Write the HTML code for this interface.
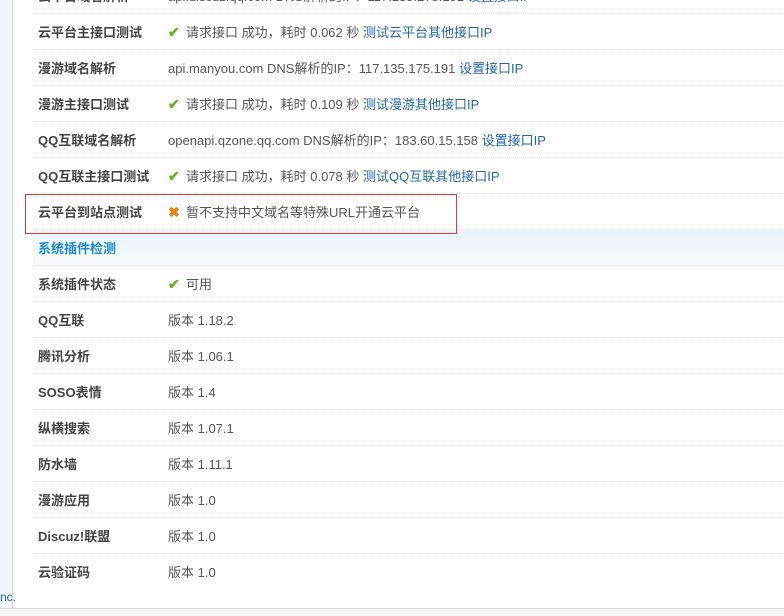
<!DOCTYPE html><html><head><meta charset="utf-8"><style>
body{margin:0;width:784px;height:615px;overflow:hidden;background:#fff;font-family:"Liberation Sans","Noto Sans CJK SC",sans-serif;font-size:13px;color:#444;position:relative}
.side{position:absolute;left:0;top:0;width:12px;height:608px;background:#eef6fc;border-right:1px solid #c7dcef}
.foot{position:absolute;left:0;top:608px;width:784px;height:7px;background:#f4f4f4;border-top:1px solid #d8d8d8}
.row{position:absolute;left:33px;width:751px;height:35px;border-bottom:1px dotted #d4e3ef}
.row b{position:absolute;left:5px;top:8px;font-weight:bold;color:#444;font-size:13px}
.row span.v{position:absolute;left:135px;top:8px;color:#555}
a{color:#2366a8;text-decoration:none}
.hd{background:linear-gradient(#eaf3fb,#f7fbfe)}
.hd b{color:#1b88c9}
.ok{display:inline-block;width:18px;color:#5fb31e;font-weight:bold;font-size:14px}
.x{display:inline-block;width:18px;color:#f27d0c;font-weight:bold;font-size:14px}
.box{position:absolute;left:25px;top:194px;width:430px;height:38px;border:1px solid #e03a3a}
</style></head><body>
<div class="side"></div>
<div class="row" style="top:-22px"><b>云平台域名解析</b><span class="v">api.discuz.qq.com DNS解析的IP：117.135.175.191 <a>设置接口IP</a></span></div>
<div class="row" style="top:14px"><b>云平台主接口测试</b><span class="v"><span class="ok">✔</span>请求接口 成功，耗时 0.062 秒 <a>测试云平台其他接口IP</a></span></div>
<div class="row" style="top:50px"><b>漫游域名解析</b><span class="v">api.manyou.com DNS解析的IP：117.135.175.191 <a>设置接口IP</a></span></div>
<div class="row" style="top:86px"><b>漫游主接口测试</b><span class="v"><span class="ok">✔</span>请求接口 成功，耗时 0.109 秒 <a>测试漫游其他接口IP</a></span></div>
<div class="row" style="top:122px"><b>QQ互联域名解析</b><span class="v">openapi.qzone.qq.com DNS解析的IP：183.60.15.158 <a>设置接口IP</a></span></div>
<div class="row" style="top:158px"><b>QQ互联主接口测试</b><span class="v"><span class="ok">✔</span>请求接口 成功，耗时 0.078 秒 <a>测试QQ互联其他接口IP</a></span></div>
<div class="row" style="top:194px"><b>云平台到站点测试</b><span class="v"><span class="x">✖</span>暂不支持中文域名等特殊URL开通云平台</span></div>
<div class="row hd" style="top:230px"><b>系统插件检测</b></div>
<div class="row" style="top:266px"><b>系统插件状态</b><span class="v"><span class="ok">✔</span>可用</span></div>
<div class="row" style="top:302px"><b>QQ互联</b><span class="v">版本 1.18.2</span></div>
<div class="row" style="top:338px"><b>腾讯分析</b><span class="v">版本 1.06.1</span></div>
<div class="row" style="top:374px"><b>SOSO表情</b><span class="v">版本 1.4</span></div>
<div class="row" style="top:410px"><b>纵横搜索</b><span class="v">版本 1.07.1</span></div>
<div class="row" style="top:446px"><b>防水墙</b><span class="v">版本 1.11.1</span></div>
<div class="row" style="top:482px"><b>漫游应用</b><span class="v">版本 1.0</span></div>
<div class="row" style="top:518px"><b>Discuz!联盟</b><span class="v">版本 1.0</span></div>
<div class="row" style="top:554px;border:none"><b>云验证码</b><span class="v">版本 1.0</span></div>
<div class="box"></div>
<div style="position:absolute;left:0;top:590px;font-size:12px;color:#2366a8">nc.</div>
<div class="foot"></div>
</body></html>
